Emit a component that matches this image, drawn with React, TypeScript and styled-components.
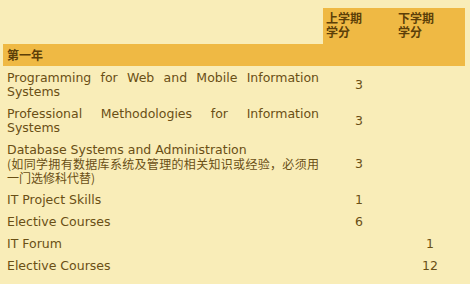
import styled, { createGlobalStyle } from 'styled-components';

const GlobalStyle = createGlobalStyle`
  html, body {
    margin: 0;
    padding: 0;
    background: #f9edb8;
  }
`;

const Page = styled.div`
  padding: 8px 5px 0 3px;
  font-family: "DejaVu Sans", "Noto Sans CJK SC", sans-serif;
  color: #6a4f15;
`;

const Table = styled.table`
  width: 462px;
  border-collapse: collapse;
  table-layout: fixed;
`;

const HeadCell = styled.th<{ $filled?: boolean }>`
  background: ${(p) => (p.$filled ? '#efb944' : 'transparent')};
  color: #5c3f08;
  font-family: "Noto Sans CJK SC", sans-serif;
  font-size: 12px;
  font-weight: 700;
  line-height: 14px;
  height: 36px;
  box-sizing: border-box;
  text-align: left;
  vertical-align: top;
  padding: 3px 3px 0 3px;
`;

const YearCell = styled.td`
  background: #efb944;
  color: #5c3f08;
  font-family: "Noto Sans CJK SC", sans-serif;
  font-size: 12px;
  font-weight: 700;
  line-height: 14px;
  height: 22px;
  padding: 0 4px;
  box-sizing: border-box;
`;

const NameCell = styled.td`
  font-size: 12.5px;
  line-height: 14px;
  text-align: justify;
  padding: 5px 4px 3px;
  vertical-align: middle;
`;

const CreditCell = styled.td`
  font-size: 12.5px;
  line-height: 14px;
  text-align: center;
  padding: 5px 0 3px;
  vertical-align: middle;
`;

const Note = styled.span`
  font-family: "Noto Sans CJK SC", sans-serif;
  font-size: 12px;
  line-height: 14px;
  vertical-align: top;
`;

type Course = { name: string; note?: string; first?: number; second?: number };

const courses: Course[] = [
  { name: 'Programming for Web and Mobile Information Systems', first: 3 },
  { name: 'Professional Methodologies for Information Systems', first: 3 },
  {
    name: 'Database Systems and Administration',
    note: '(如同学拥有数据库系统及管理的相关知识或经验，必须用一门选修科代替)',
    first: 3,
  },
  { name: 'IT Project Skills', first: 1 },
  { name: 'Elective Courses', first: 6 },
  { name: 'IT Forum', second: 1 },
  { name: 'Elective Courses', second: 12 },
];

const App = () => {
  return (
    <Page>
      <GlobalStyle />
      <Table>
        <colgroup>
          <col style={{ width: 320 }} />
          <col style={{ width: 72 }} />
          <col style={{ width: 70 }} />
        </colgroup>
        <thead>
          <tr>
            <HeadCell />
            <HeadCell $filled>上学期<br />学分</HeadCell>
            <HeadCell $filled>下学期<br />学分</HeadCell>
          </tr>
        </thead>
        <tbody>
          <tr>
            <YearCell colSpan={3}>第一年</YearCell>
          </tr>
          {courses.map((c, i) => (
            <tr key={i}>
              <NameCell>
                {c.name}
                {c.note && (
                  <>
                    <br />
                    <Note>{c.note}</Note>
                  </>
                )}
              </NameCell>
              <CreditCell>{c.first ?? ''}</CreditCell>
              <CreditCell>{c.second ?? ''}</CreditCell>
            </tr>
          ))}
        </tbody>
      </Table>
    </Page>
  );
};

export default App;
